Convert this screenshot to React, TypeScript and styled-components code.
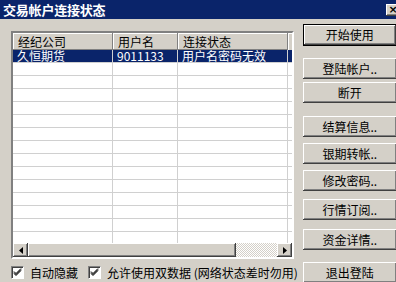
import React from 'react';
import styled, { createGlobalStyle } from 'styled-components';

const Global = createGlobalStyle`
    html, body {
        margin: 0;
        padding: 0;
        background: #d4d0c8;
    }
    body {
        font-family: "Noto Sans CJK SC", "DejaVu Sans", sans-serif;
        font-size: 12px;
        color: #000;
    }
`

const Frame = styled.div`
    width: 396px;
    height: 282px;
    overflow: hidden;
    background: #d4d0c8;
`

const Window = styled.div`
    width: 404px;
`

const TitleBar = styled.div`
    height: 19px;
    background: #0a246a;
    display: flex;
    align-items: center;
    justify-content: space-between;
    padding-left: 3px;
`

const TitleText = styled.span`
    color: #fff;
    font-weight: 700;
    font-size: 13px;
    line-height: 19px;
    letter-spacing: -0.2px;
`

const CloseBtn = styled.div`
    width: 14px;
    height: 12px;
    margin-right: 4px;
    background: #d4d0c8;
    box-shadow: inset -1px -1px #404040, inset 1px 1px #fff, inset -2px -2px #808080;
    display: flex;
    align-items: center;
    justify-content: center;
    font-family: "DejaVu Sans", sans-serif;
    font-weight: 700;
    font-size: 11px;
    line-height: 12px;
`

const Body = styled.div`
    display: flex;
    align-items: flex-start;
    padding: 5px 0 0 11px;
    gap: 5px;
`

const LeftCol = styled.div`
    display: flex;
    flex-direction: column;
    padding-top: 7px;
`

const ListView = styled.div`
    width: 279px;
    height: 224px;
    border: 2px solid;
    border-color: #808080 #fff #fff #808080;
    box-shadow: inset 1px 1px #404040;
    background: #fff;
    display: flex;
    flex-direction: column;
    overflow: hidden;
`

const Header = styled.div`
    display: flex;
    height: 17px;
    flex-shrink: 0;
    background: #d4d0c8;
`

const HeadCell = styled.div<{ w: number }>`
    width: ${p => p.w}px;
    flex-shrink: 0;
    box-sizing: border-box;
    padding-left: 5px;
    line-height: 17px;
    white-space: nowrap;
    box-shadow: inset -1px -1px #808080, inset 1px 1px #fff;
`

const HeadFill = styled.div`
    flex: 1;
    box-shadow: inset 1px 1px #fff;
`

const Rows = styled.div`
    flex: 1;
    overflow: hidden;
`

const Row = styled.div<{ selected?: boolean }>`
    display: flex;
    height: 13px;
    box-sizing: border-box;
    border-bottom: 1px solid #d0d0d0;
    background: ${p => (p.selected ? '#0a246a' : '#fff')};
    color: ${p => (p.selected ? '#fff' : '#000')};
`

const Cell = styled.div<{ w: number }>`
    width: ${p => p.w}px;
    flex-shrink: 0;
    box-sizing: border-box;
    border-right: 1px solid #d0d0d0;
    padding-left: 4px;
    line-height: 12px;
    white-space: nowrap;
`

const ScrollBar = styled.div`
    display: flex;
    height: 14px;
    flex-shrink: 0;
`

const ArrowBtn = styled.div`
    width: 15px;
    height: 14px;
    box-sizing: border-box;
    background: #d4d0c8;
    box-shadow: inset -1px -1px #404040, inset 1px 1px #fff, inset -2px -2px #808080;
    display: flex;
    align-items: center;
    justify-content: center;
`

const Thumb = styled.div`
    width: 208px;
    height: 14px;
    background: #d4d0c8;
    box-shadow: inset -1px -1px #404040, inset 1px 1px #fff, inset -2px -2px #808080;
`

const Track = styled.div`
    flex: 1;
    background-color: #fff;
    background-image: repeating-conic-gradient(#d4d0c8 0 25%, #fff 0 50%);
    background-size: 2px 2px;
`

const CheckRow = styled.div`
    display: flex;
    align-items: center;
    margin-top: 7px;
    height: 13px;
`

const Box = styled.span`
    width: 13px;
    height: 13px;
    flex-shrink: 0;
    box-sizing: border-box;
    background: #fff;
    border: 1px solid;
    border-color: #808080 #fff #fff #808080;
    box-shadow: inset 1px 1px #404040;
    display: flex;
    align-items: center;
    justify-content: center;
`

const CheckLabel = styled.span<{ ml: number; mr?: number }>`
    margin-left: ${p => p.ml}px;
    margin-right: ${p => p.mr ?? 0}px;
    line-height: 13px;
    white-space: nowrap;
`

const RightCol = styled.div`
    display: flex;
    flex-direction: column;
    width: 94px;
`

const Btn = styled.button<{ mt: number; isDefault?: boolean }>`
    margin-top: ${p => p.mt}px;
    height: ${p => (p.isDefault ? 22 : 21)}px;
    width: 94px;
    padding: 0;
    font-family: inherit;
    font-size: 12px;
    line-height: 12px;
    color: #000;
    background: #d4d0c8;
    border: ${p => (p.isDefault ? '1px solid #000' : 'none')};
    box-shadow: inset -1px -1px #404040, inset 1px 1px #fff, inset -2px -2px #808080;
    cursor: default;
`

const cols = [100, 65, 110]

function Check() {
    return (
        <Box>
            <svg width="9" height="9" viewBox="0 0 9 9">
                <path d="M1 3.5 L3 5.5 L8 0.5 M1 4.5 L3 6.5 L8 1.5 M1 5.5 L3 7.5 L8 2.5" stroke="#000" strokeWidth="1" fill="none" />
            </svg>
        </Box>
    )
}

function Arrow({ dir }: { dir: 'left' | 'right' }) {
    return (
        <svg width="4" height="7" viewBox="0 0 4 7">
            {dir === 'left' ? <path d="M4 0 L0 3.5 L4 7 Z" fill="#000" /> : <path d="M0 0 L4 3.5 L0 7 Z" fill="#000" />}
        </svg>
    )
}

const buttons: { label: string; mt: number; isDefault?: boolean }[] = [
    { label: '开始使用', mt: 0, isDefault: true },
    { label: '登陆帐户..', mt: 12 },
    { label: '断开', mt: 3 },
    { label: '结算信息..', mt: 13 },
    { label: '银期转帐..', mt: 6 },
    { label: '修改密码..', mt: 6 },
    { label: '行情订阅..', mt: 8 },
    { label: '资金详情..', mt: 9 },
    { label: '退出登陆', mt: 12 },
]

export default function App() {
    const empty = Array.from({ length: 16 })
    return (
        <Frame>
            <Global />
            <Window>
                <TitleBar>
                    <TitleText>交易帐户连接状态</TitleText>
                    <CloseBtn>×</CloseBtn>
                </TitleBar>
                <Body>
                    <LeftCol>
                        <ListView>
                            <Header>
                                <HeadCell w={cols[0]}>经纪公司</HeadCell>
                                <HeadCell w={cols[1]}>用户名</HeadCell>
                                <HeadCell w={cols[2]}>连接状态</HeadCell>
                                <HeadFill />
                            </Header>
                            <Rows>
                                <Row selected>
                                    <Cell w={cols[0]}>久恒期货</Cell>
                                    <Cell w={cols[1]}>9011133</Cell>
                                    <Cell w={cols[2]}>用户名密码无效</Cell>
                                </Row>
                                {empty.map((_, i) => (
                                    <Row key={i}>
                                        <Cell w={cols[0]} />
                                        <Cell w={cols[1]} />
                                        <Cell w={cols[2]} />
                                    </Row>
                                ))}
                            </Rows>
                            <ScrollBar>
                                <ArrowBtn><Arrow dir="left" /></ArrowBtn>
                                <Thumb />
                                <Track />
                                <ArrowBtn><Arrow dir="right" /></ArrowBtn>
                            </ScrollBar>
                        </ListView>
                        <CheckRow>
                            <Check />
                            <CheckLabel ml={6} mr={10}>自动隐藏</CheckLabel>
                            <Check />
                            <CheckLabel ml={6}>允许使用双数据 (网络状态差时勿用)</CheckLabel>
                        </CheckRow>
                    </LeftCol>
                    <RightCol>
                        {buttons.map(b => (
                            <Btn key={b.label} mt={b.mt} isDefault={b.isDefault}>{b.label}</Btn>
                        ))}
                    </RightCol>
                </Body>
            </Window>
        </Frame>
    )
}
